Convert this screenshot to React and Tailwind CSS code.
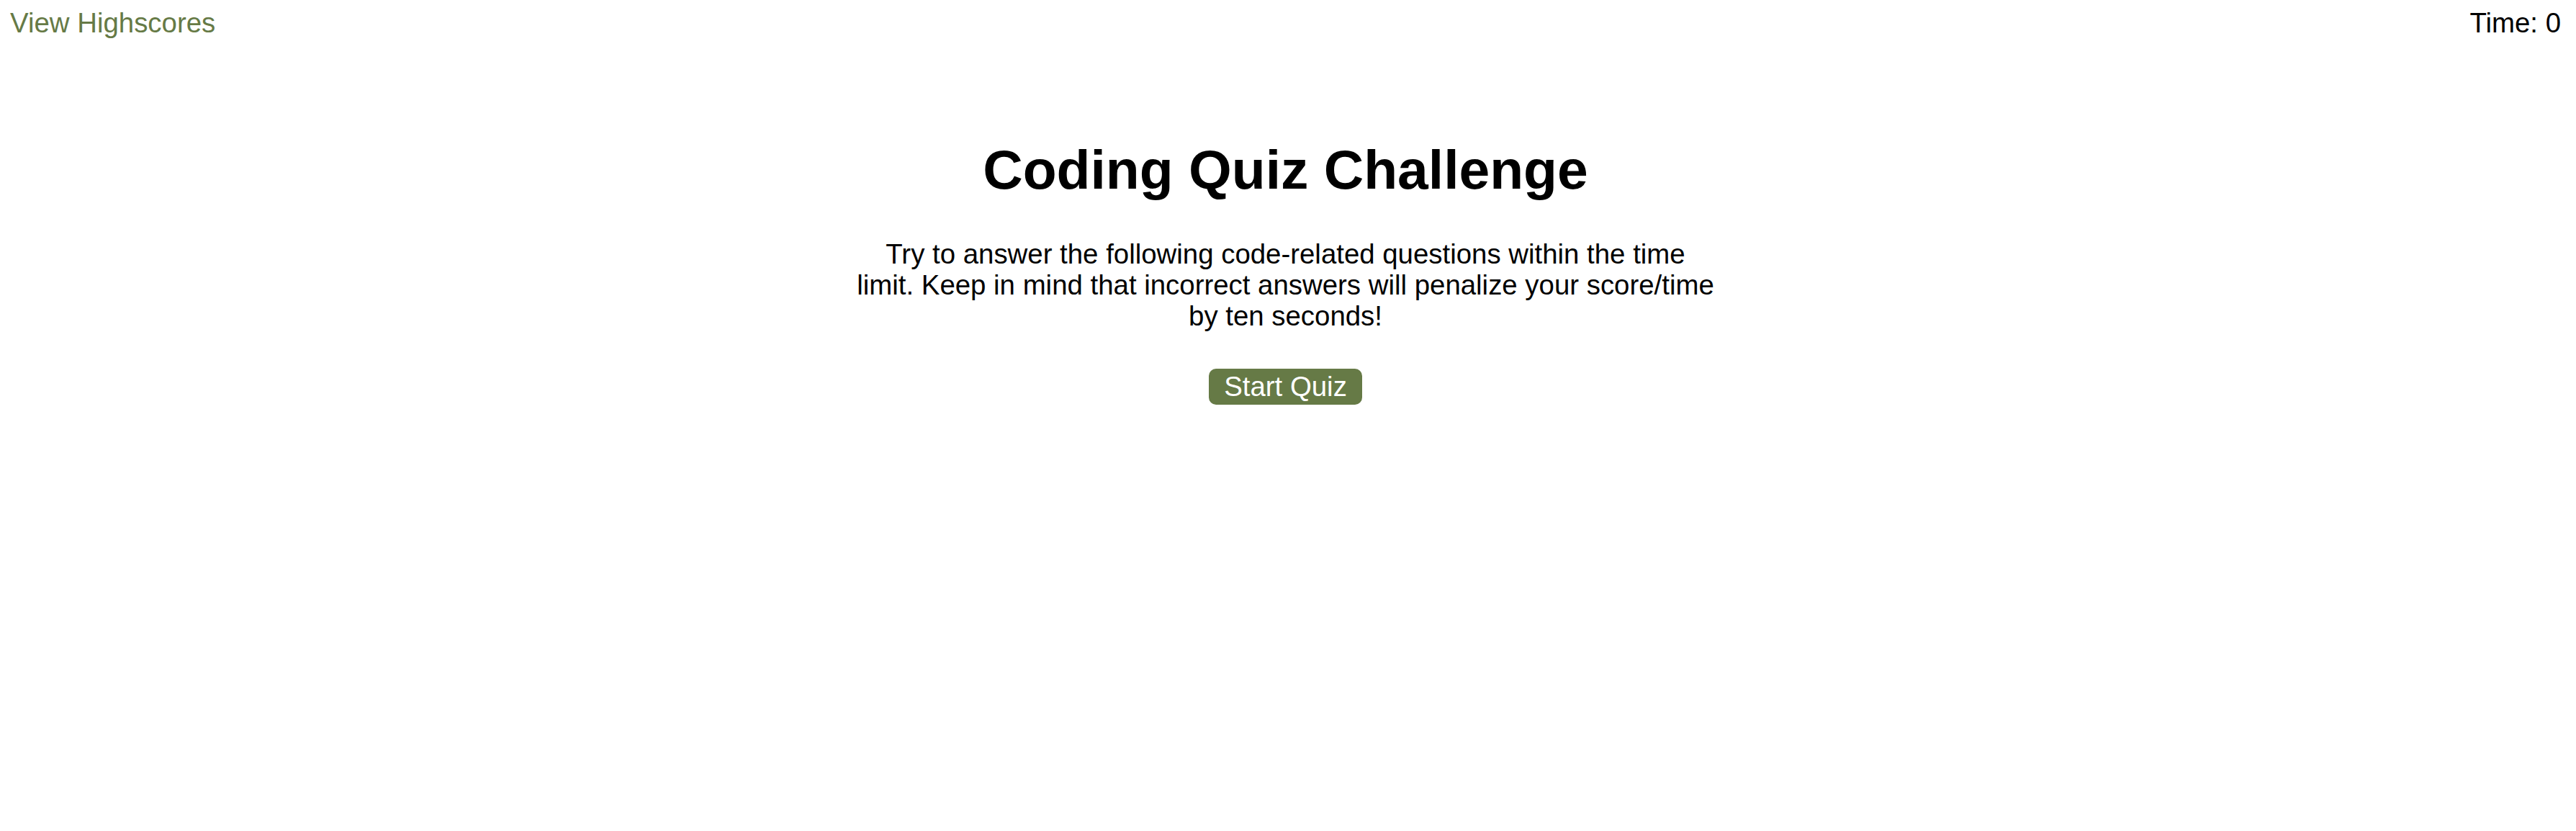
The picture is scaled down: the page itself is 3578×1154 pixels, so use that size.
import React from "react";

const FONT = { fontFamily: '"Liberation Sans", Arial, sans-serif' };

export default function App() {
  return (
    <div className="min-h-screen bg-white text-black" style={FONT}>
      <header className="flex items-start justify-between pl-[14px] pr-[21px] pt-[10px] text-[38.4px] leading-[43px]">
        <a href="#" className="text-[#667a46] no-underline">View Highscores</a>
        <div>Time: 0</div>
      </header>

      <main className="mt-[138px] flex flex-col items-center pr-[7px]">
        <h1 className="text-[76.8px] font-bold leading-[88px]">Coding Quiz Challenge</h1>
        <p className="mt-[52px] w-[1196px] text-center text-[38.4px] leading-[43px]">
          Try to answer the following code-related questions within the time limit. Keep in mind that incorrect
          answers will penalize your score/time by ten seconds!
        </p>
        <button className="mt-[52px] rounded-[10px] bg-[#667a46] px-[21px] py-[3px] text-[38.4px] leading-[44px] text-white">
          Start Quiz
        </button>
      </main>
    </div>
  );
}
